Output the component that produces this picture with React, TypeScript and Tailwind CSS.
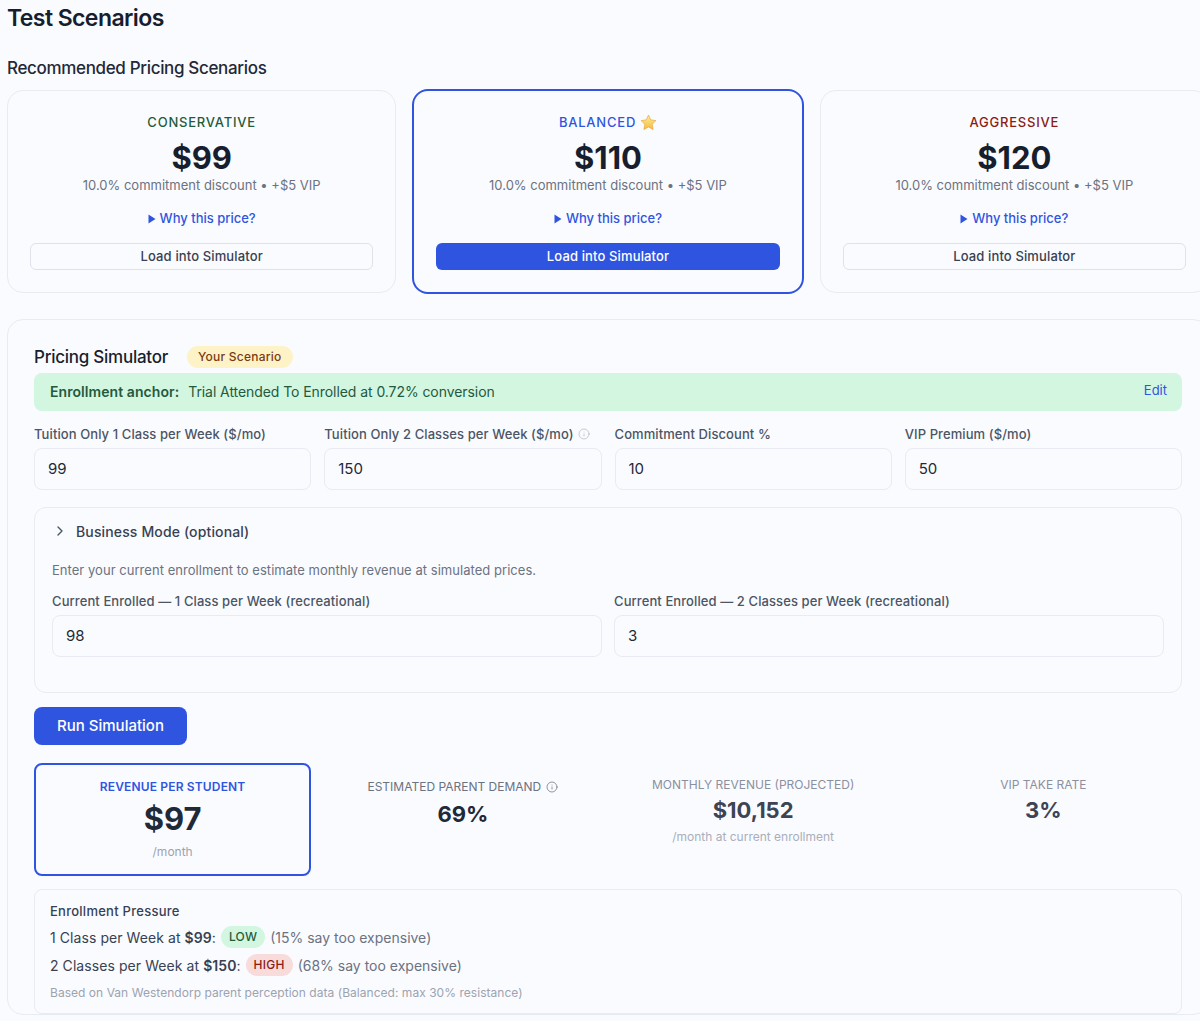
import { ChevronRight, Info } from "lucide-react";

const scenarios = [
  { name: "CONSERVATIVE", price: "$99", color: "text-[#1f5c3a]", featured: false },
  { name: "BALANCED", price: "$110", color: "text-[#2f55e0]", featured: true },
  { name: "AGGRESSIVE", price: "$120", color: "text-[#8c1c13]", featured: false },
];

const inputs = [
  { label: "Tuition Only 1 Class per Week ($/mo)", value: "99", info: false },
  { label: "Tuition Only 2 Classes per Week ($/mo)", value: "150", info: true },
  { label: "Commitment Discount %", value: "10", info: false },
  { label: "VIP Premium ($/mo)", value: "50", info: false },
];

// ── Small drawings ──────────────────────────────────────────────────────────
function Star() {
  return (
    <svg width="17" height="17" viewBox="0 0 24 24" className="ml-[4px] inline-block">
      <defs>
        <linearGradient id="star-fill" x1="0" y1="0" x2="0" y2="1">
          <stop offset="0" stopColor="#fdeea0" />
          <stop offset="1" stopColor="#f6bb3c" />
        </linearGradient>
      </defs>
      <path
        d="M12 1.5l3.2 6.8 7.3 1-5.3 5.1 1.3 7.4L12 18.3l-6.5 3.5 1.3-7.4L1.5 9.3l7.3-1z"
        fill="url(#star-fill)"
        stroke="#e8a93a"
        strokeWidth="1"
        strokeLinejoin="round"
      />
    </svg>
  );
}

function Triangle() {
  return (
    <svg width="8" height="10" viewBox="0 0 8 10" className="mr-[5px]">
      <path d="M0.5 0.5L7.5 5L0.5 9.5z" fill="#2f55e0" />
    </svg>
  );
}

function ScenarioCard({ name, price, color, featured }: (typeof scenarios)[number]) {
  return (
    <div
      className={`flex flex-col items-center rounded-2xl px-[22px] pt-[22px] ${
        featured ? "-m-px h-[205px] border-2 border-[#2f55e0]" : "h-[203px] border border-[#e9ebf2]"
      }`}
    >
      <div className={`flex h-[18px] items-center text-[13px] font-medium leading-[18px] tracking-[0.06em] ${color}`}>
        {name}
        {featured && <Star />}
      </div>
      <div className="mt-[7px] text-[31px] font-bold leading-[40px] text-[#171e2e]">{price}</div>
      <div className="mt-[-2px] text-[13px] leading-[18px] text-[#6b7280]">
        10.0% commitment discount • +$5 VIP
      </div>
      <div className="mt-[16px] flex h-[18px] items-center text-[13px] font-medium text-[#2f55e0]">
        <Triangle />
        <span className="ml-[-1px]">Why this price?</span>
      </div>
      <button
        className={`mt-[15px] h-[27px] w-full rounded-md text-[13px] font-medium tracking-[0.01em] ${
          featured ? "bg-[#2f55e0] text-white" : "border border-[#dfe2ea] text-[#374151]"
        }`}
      >
        Load into Simulator
      </button>
    </div>
  );
}

function Field({ label, value, info }: { label: string; value: string; info?: boolean }) {
  return (
    <div>
      <div className="flex h-[18px] items-center gap-[4px] whitespace-nowrap text-[13px] font-medium leading-[18px] tracking-[0.007em] text-[#4b5563]">
        {label}
        {info && <Info size={12} strokeWidth={1.5} className="text-[#b4bac6]" />}
      </div>
      <div className="mt-[5px] flex h-[42px] items-center rounded-lg border border-[#e9ebf2] px-[13px] pt-[1px] text-[15px] text-[#1f2937]">
        {value}
      </div>
    </div>
  );
}

function Pill({ children, className }: { children: string; className: string }) {
  return (
    <span className={`mx-[5px] inline-flex h-[22px] items-center rounded-full px-[8px] text-[12px] font-medium tracking-[0.02em] ${className}`}>
      {children}
    </span>
  );
}

export default function App() {
  return (
    <div className="h-[1021px] w-[1200px] overflow-hidden bg-[#fafbff] pl-[7px] pt-[1px] font-['Inter',sans-serif] antialiased">
      <div className="w-[1202px]">
        <h1 className="text-[23px] font-semibold leading-[34px] tracking-[-0.025em] text-[#171e2e]">Test Scenarios</h1>
        <h2 className="mt-[21px] text-[17px] font-medium leading-[24px] tracking-[-0.02em] text-[#1f2937]">
          Recommended Pricing Scenarios
        </h2>

        <div className="mt-[10px] grid grid-cols-3 gap-[17px]">
          {scenarios.map((s) => (
            <ScenarioCard key={s.name} {...s} />
          ))}
        </div>

        <div className="mt-[26px] rounded-2xl border border-[#e9ebf2] px-[26px] pt-[25px]">
          <div className="flex h-[24px] items-center">
            <h3 className="mt-[2px] text-[17px] font-medium tracking-[-0.015em] text-[#171e2e]">Pricing Simulator</h3>
            <span className="ml-[19px] flex h-[22px] items-center rounded-full bg-[#fdf3c7] px-[11px] text-[12px] font-medium tracking-[0.02em] text-[#7c3a12]">
              Your Scenario
            </span>
          </div>

          <div className="mt-[4px] flex h-[38px] items-center justify-between rounded-lg bg-[#d3f6e1] px-[15px] pb-[2px] text-[14px] text-[#24593d]">
            <div>
              <span className="ml-[1px] font-semibold tracking-[0.005em]">Enrollment anchor:</span>
              <span className="ml-[9px] tracking-[-0.005em]">Trial Attended To Enrolled at 0.72% conversion</span>
            </div>
            <span className="text-[13px] text-[#2f55e0]">Edit</span>
          </div>

          <div className="mt-[14px] grid grid-cols-4 gap-x-[13px]">
            {inputs.map((f) => (
              <Field key={f.label} {...f} />
            ))}
          </div>

          <div className="mt-[17px] h-[186px] rounded-xl border border-[#e9ebf2] px-[17px] pt-[13px]">
            <div className="flex h-[20px] items-center text-[14px] font-medium tracking-[0.01em] text-[#374151]">
              <ChevronRight size={16} strokeWidth={2} className="text-[#4b5563]" />
              <span className="ml-[8px]">Business Mode (optional)</span>
            </div>
            <p className="mt-[20px] text-[13px] leading-[18px] tracking-[0.003em] text-[#6b7280]">
              Enter your current enrollment to estimate monthly revenue at simulated prices.
            </p>
            <div className="mt-[13px] grid grid-cols-2 gap-x-[12px]">
              <Field label="Current Enrolled — 1 Class per Week (recreational)" value="98" />
              <Field label="Current Enrolled — 2 Classes per Week (recreational)" value="3" />
            </div>
          </div>

          <button className="mt-[14px] block h-[38px] w-[153px] rounded-lg bg-[#2f55e0] text-[15px] font-medium text-white">
            Run Simulation
          </button>

          <div className="mt-[18px] grid h-[113px] grid-cols-4 gap-x-[13px] text-center">
            <div className="rounded-lg border-2 border-[#2f55e0] pt-[14px]">
              <div className="text-[12px] font-semibold leading-[16px] tracking-[0.013em] text-[#2f55e0]">REVENUE PER STUDENT</div>
              <div className="mt-[4px] text-[31px] font-bold leading-[40px] text-[#1f2937]">$97</div>
              <div className="mt-[5px] text-[12px] leading-[16px] text-[#9ca3af]">/month</div>
            </div>
            <div className="pt-[15px]">
              <div className="flex h-[18px] items-center justify-center gap-[5px] whitespace-nowrap text-[12px] text-[#6b7280]">
                ESTIMATED PARENT DEMAND
                <Info size={12} strokeWidth={1.5} className="text-[#6b7280]" />
              </div>
              <div className="mt-[3px] text-[22px] font-bold leading-[30px] text-[#1f2937]">69%</div>
            </div>
            <div className="pt-[13px]">
              <div className="h-[18px] whitespace-nowrap text-[12px] leading-[18px] text-[#8a90a0]">
                MONTHLY REVENUE (PROJECTED)
              </div>
              <div className="mt-[1px] text-[22px] font-bold leading-[30px] text-[#3d4454]">$10,152</div>
              <div className="mt-[3px] text-[12px] leading-[18px] text-[#a9aebb]">/month at current enrollment</div>
            </div>
            <div className="pt-[13px]">
              <div className="h-[18px] text-[12px] leading-[18px] text-[#8a90a0]">VIP TAKE RATE</div>
              <div className="mt-[1px] text-[22px] font-bold leading-[30px] text-[#3d4454]">3%</div>
            </div>
          </div>

          <div className="mt-[13px] h-[125px] rounded-lg border border-[#e9ebf2] px-[15px] pt-[11px] text-[14px] text-[#374151]">
            <div className="text-[13px] font-medium leading-[20px] tracking-[0.02em] text-[#374151]">Enrollment Pressure</div>
            <div className="mt-[4px] flex h-[24px] items-center">
              <span className="tracking-[0.005em]">
                1 Class per Week at <strong className="font-semibold">$99</strong>:
              </span>
              <Pill className="bg-[#d3f6e1] text-[#1f5c3a]">LOW</Pill>
              <span className="text-[#6b7280]">(15% say too expensive)</span>
            </div>
            <div className="mt-[4px] flex h-[24px] items-center">
              <span className="tracking-[0.005em]">
                2 Classes per Week at <strong className="font-semibold">$150</strong>:
              </span>
              <Pill className="bg-[#f8dcdc] text-[#8c1c13]">HIGH</Pill>
              <span className="text-[#6b7280]">(68% say too expensive)</span>
            </div>
            <div className="mt-[8px] text-[12px] leading-[16px] tracking-[0.003em] text-[#9ca3af]">
              Based on Van Westendorp parent perception data (Balanced: max 30% resistance)
            </div>
          </div>
        </div>
      </div>
    </div>
  );
}
